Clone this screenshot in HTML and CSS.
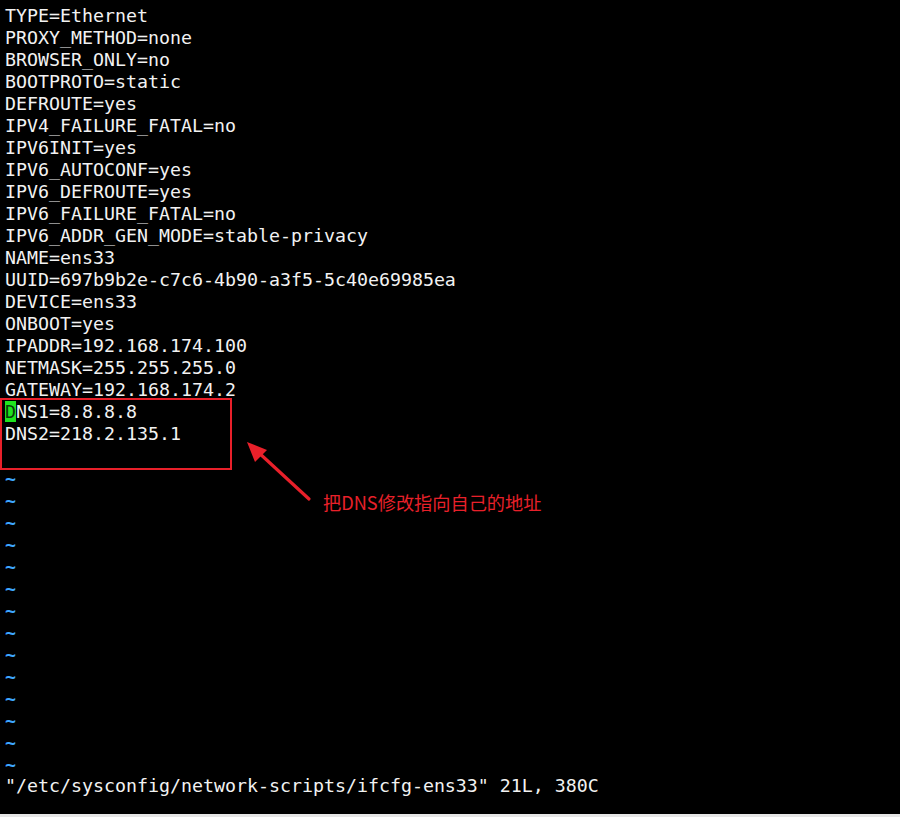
FILE: index.html
```html
<!DOCTYPE html>
<html>
<head>
<meta charset="utf-8">
<link rel="stylesheet" href="styles.css">
</head>
<body>
<div class="term">
<div class="lines">
<div class="ln">TYPE=Ethernet</div>
<div class="ln">PROXY_METHOD=none</div>
<div class="ln">BROWSER_ONLY=no</div>
<div class="ln">BOOTPROTO=static</div>
<div class="ln">DEFROUTE=yes</div>
<div class="ln">IPV4_FAILURE_FATAL=no</div>
<div class="ln">IPV6INIT=yes</div>
<div class="ln">IPV6_AUTOCONF=yes</div>
<div class="ln">IPV6_DEFROUTE=yes</div>
<div class="ln">IPV6_FAILURE_FATAL=no</div>
<div class="ln">IPV6_ADDR_GEN_MODE=stable-privacy</div>
<div class="ln">NAME=ens33</div>
<div class="ln">UUID=697b9b2e-c7c6-4b90-a3f5-5c40e69985ea</div>
<div class="ln">DEVICE=ens33</div>
<div class="ln">ONBOOT=yes</div>
<div class="ln">IPADDR=192.168.174.100</div>
<div class="ln">NETMASK=255.255.255.0</div>
<div class="ln">GATEWAY=192.168.174.2</div>
<div class="ln"><span class="cursor">D</span>NS1=8.8.8.8</div>
<div class="ln">DNS2=218.2.135.1</div>
<div class="ln"> </div>
<div class="ln tilde">~</div>
<div class="ln tilde">~</div>
<div class="ln tilde">~</div>
<div class="ln tilde">~</div>
<div class="ln tilde">~</div>
<div class="ln tilde">~</div>
<div class="ln tilde">~</div>
<div class="ln tilde">~</div>
<div class="ln tilde">~</div>
<div class="ln tilde">~</div>
<div class="ln tilde">~</div>
<div class="ln tilde">~</div>
<div class="ln tilde">~</div>
<div class="ln tilde">~</div>
<div class="ln">"/etc/sysconfig/network-scripts/ifcfg-ens33" 21L, 380C</div>
</div>
<div class="highlight-box"></div>
<svg class="arrow" width="900" height="817" viewBox="0 0 900 817">
<line x1="309" y1="499" x2="258" y2="452" stroke="#e8202a" stroke-width="3.2" stroke-linecap="round"/>
<polygon points="247,442 267,450 255,462" fill="#e8202a"/>
</svg>
<div class="note">把DNS修改指向自己的地址</div>
</div>
<div class="bottom-strip"></div>
</body>
</html>
```

FILE: styles.css
```css
html, body {
  margin: 0;
  padding: 0;
  background: #000;
}
.term {
  position: relative;
  height: 814px;
  background: #000;
  overflow: hidden;
}
.lines {
  display: flex;
  flex-direction: column;
  padding: 5px 0 0 5px;
  font-family: "DejaVu Sans Mono", "Liberation Mono", monospace;
  font-size: 18.27px;
  line-height: 22px;
  color: #f2f2f2;
}
.ln {
  height: 22px;
  white-space: pre;
}
.tilde {
  color: #3ea6ff;
  font-weight: bold;
  position: relative;
  top: 1px;
}
.cursor {
  display: inline-block;
  width: 11px;
  height: 21px;
  line-height: 21px;
  vertical-align: top;
  background: #1fe31f;
  color: #0a3a0a;
}
.highlight-box {
  position: absolute;
  left: 0;
  top: 398px;
  width: 228px;
  height: 68px;
  border: 2.5px solid #e8202a;
  box-sizing: content-box;
}
.arrow {
  position: absolute;
  left: 0;
  top: 0;
}
.note {
  position: absolute;
  left: 323px;
  top: 490px;
  font-family: "Noto Sans CJK SC", "Noto Sans", sans-serif;
  font-size: 18.2px;
  line-height: 24px;
  color: #e8202a;
}
.bottom-strip {
  height: 3px;
  background: #e6e6e6;
}
```
